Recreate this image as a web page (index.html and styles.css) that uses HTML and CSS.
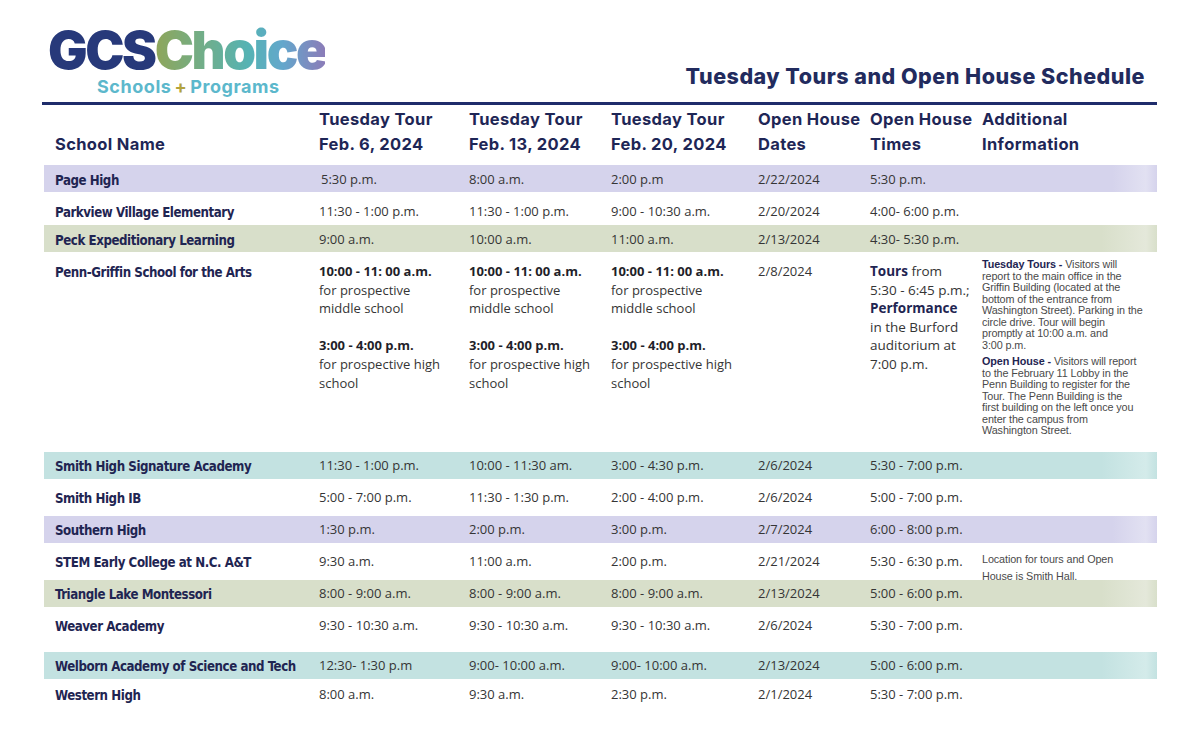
FILE: index.html
```html
<!DOCTYPE html>
<html lang="en">
<head>
<meta charset="utf-8">
<title>Tuesday Tours and Open House Schedule</title>
<link rel="stylesheet" href="styles.css">
</head>
<body>
<div class="page">
  <header class="top">
    <div class="logo">
      <div class="wordmark"><span class="gcs">GCS</span><span class="choice">Choice</span></div>
      <div class="tag">Schools<span class="plus">+</span>Programs</div>
    </div>
    <h1 class="title">Tuesday Tours and Open House Schedule</h1>
  </header>

  <div class="table">
    <div class="row head">
      <div class="th">School Name</div>
      <div class="th">Tuesday Tour<br>Feb. 6, 2024</div>
      <div class="th">Tuesday Tour<br>Feb. 13, 2024</div>
      <div class="th">Tuesday Tour<br>Feb. 20, 2024</div>
      <div class="th">Open House<br>Dates</div>
      <div class="th">Open House<br>Times</div>
      <div class="th">Additional<br>Information</div>
    </div>

    <div class="row band lav first">
      <div class="name">Page High</div>
      <div class="cell nudge">5:30 p.m.</div>
      <div class="cell">8:00 a.m.</div>
      <div class="cell">2:00 p.m</div>
      <div class="cell">2/22/2024</div>
      <div class="cell">5:30 p.m.</div>
      <div class="cell"></div>
    </div>

    <div class="row r33">
      <div class="name">Parkview Village Elementary</div>
      <div class="cell">11:30 - 1:00 p.m.</div>
      <div class="cell">11:30 - 1:00 p.m.</div>
      <div class="cell">9:00 - 10:30 a.m.</div>
      <div class="cell">2/20/2024</div>
      <div class="cell">4:00- 6:00 p.m.</div>
      <div class="cell"></div>
    </div>

    <div class="row band sage first">
      <div class="name">Peck Expeditionary Learning</div>
      <div class="cell">9:00 a.m.</div>
      <div class="cell">10:00 a.m.</div>
      <div class="cell">11:00 a.m.</div>
      <div class="cell">2/13/2024</div>
      <div class="cell">4:30- 5:30 p.m.</div>
      <div class="cell"></div>
    </div>

    <div class="row penn">
      <div class="name">Penn-Griffin School for the Arts</div>
      <div class="cell tall"><b>10:00 - 11: 00 a.m.</b><br>for prospective<br>middle school<br><br><b>3:00 - 4:00 p.m.</b><br>for prospective high<br>school</div>
      <div class="cell tall"><b>10:00 - 11: 00 a.m.</b><br>for prospective<br>middle school<br><br><b>3:00 - 4:00 p.m.</b><br>for prospective high<br>school</div>
      <div class="cell tall"><b>10:00 - 11: 00 a.m.</b><br>for prospective<br>middle school<br><br><b>3:00 - 4:00 p.m.</b><br>for prospective high<br>school</div>
      <div class="cell">2/8/2024</div>
      <div class="cell tall times"><b>Tours</b> from<br>5:30 - 6:45 p.m.;<br><b>Performance</b><br>in the Burford<br>auditorium at<br>7:00 p.m.</div>
      <div class="info">
        <p><b>Tuesday Tours -</b> Visitors will<br>report to the main office in the<br>Griffin Building (located at the<br>bottom of the entrance from<br>Washington Street). Parking in the<br>circle drive. Tour will begin<br>promptly at 10:00 a.m. and<br>3:00 p.m.</p>
        <p><b>Open House -</b> Visitors will report<br>to the February 11 Lobby in the<br>Penn Building to register for the<br>Tour. The Penn Building is the<br>first building on the left once you<br>enter the campus from<br>Washington Street.</p>
      </div>
    </div>

    <div class="row band teal">
      <div class="name">Smith High Signature Academy</div>
      <div class="cell">11:30 - 1:00 p.m.</div>
      <div class="cell">10:00 - 11:30 am.</div>
      <div class="cell">3:00 - 4:30 p.m.</div>
      <div class="cell">2/6/2024</div>
      <div class="cell">5:30 - 7:00 p.m.</div>
      <div class="cell"></div>
    </div>

    <div class="row r37">
      <div class="name">Smith High IB</div>
      <div class="cell">5:00 - 7:00 p.m.</div>
      <div class="cell">11:30 - 1:30 p.m.</div>
      <div class="cell">2:00 - 4:00 p.m.</div>
      <div class="cell">2/6/2024</div>
      <div class="cell">5:00 - 7:00 p.m.</div>
      <div class="cell"></div>
    </div>

    <div class="row band lav">
      <div class="name">Southern High</div>
      <div class="cell">1:30 p.m.</div>
      <div class="cell">2:00 p.m.</div>
      <div class="cell">3:00 p.m.</div>
      <div class="cell">2/7/2024</div>
      <div class="cell">6:00 - 8:00 p.m.</div>
      <div class="cell"></div>
    </div>

    <div class="row r37">
      <div class="name">STEM Early College at N.C. A&amp;T</div>
      <div class="cell">9:30 a.m.</div>
      <div class="cell">11:00 a.m.</div>
      <div class="cell">2:00 p.m.</div>
      <div class="cell">2/21/2024</div>
      <div class="cell">5:30 - 6:30 p.m.</div>
      <div class="note">Location for tours and Open<br>House is Smith Hall.</div>
    </div>

    <div class="row band sage">
      <div class="name">Triangle Lake Montessori</div>
      <div class="cell">8:00 - 9:00 a.m.</div>
      <div class="cell">8:00 - 9:00 a.m.</div>
      <div class="cell">8:00 - 9:00 a.m.</div>
      <div class="cell">2/13/2024</div>
      <div class="cell">5:00 - 6:00 p.m.</div>
      <div class="cell"></div>
    </div>

    <div class="row r45">
      <div class="name">Weaver Academy</div>
      <div class="cell">9:30 - 10:30 a.m.</div>
      <div class="cell">9:30 - 10:30 a.m.</div>
      <div class="cell">9:30 - 10:30 a.m.</div>
      <div class="cell">2/6/2024</div>
      <div class="cell">5:30 - 7:00 p.m.</div>
      <div class="cell"></div>
    </div>

    <div class="row band teal">
      <div class="name">Welborn Academy of Science and Tech</div>
      <div class="cell">12:30- 1:30 p.m</div>
      <div class="cell">9:00- 10:00 a.m.</div>
      <div class="cell">9:00- 10:00 a.m.</div>
      <div class="cell">2/13/2024</div>
      <div class="cell">5:00 - 6:00 p.m.</div>
      <div class="cell"></div>
    </div>

    <div class="row last">
      <div class="name">Western High</div>
      <div class="cell">8:00 a.m.</div>
      <div class="cell">9:30 a.m.</div>
      <div class="cell">2:30 p.m.</div>
      <div class="cell">2/1/2024</div>
      <div class="cell">5:30 - 7:00 p.m.</div>
      <div class="cell"></div>
    </div>
  </div>
</div>
</body>
</html>
```
FILE: styles.css
```css
* { box-sizing: border-box; }
html, body { margin: 0; padding: 0; background: #ffffff; }
body { font-family: "Open Sans", "Noto Sans", sans-serif; color: #333333; }

.page { width: 1200px; height: 729px; padding-left: 42px; overflow: hidden; }

.top {
  width: 1115px;
  height: 105px;
  display: flex;
  justify-content: space-between;
  align-items: flex-end;
  border-bottom: 3px solid #1f2c6b;
}

.logo { padding-left: 6px; padding-bottom: 4px; }
.wordmark {
  font-family: "Inter", "Lato", sans-serif;
  font-weight: 900;
  font-size: 52.5px;
  line-height: 52px;
  letter-spacing: -2.4px;
  white-space: nowrap;
  margin-top: -4px;
}
.gcs { color: #27397a; }
.choice {
  background: linear-gradient(90deg, #8fa65a 0%, #6fae8c 30%, #55b3b4 55%, #63a7cc 75%, #8b7cb8 100%);
  -webkit-background-clip: text;
  background-clip: text;
  color: transparent;
}
.tag {
  font-family: "Inter", "Lato", sans-serif;
  font-weight: 700;
  font-size: 18px;
  line-height: 22px;
  color: #5cb8cc;
  padding-left: 49px;
  letter-spacing: 0.55px;
  white-space: nowrap;
}
.plus { color: #b3a33c; padding: 0 3px; }

.title {
  margin: 0 12px 14px 0;
  font-family: "Inter", "Lato", sans-serif;
  font-weight: 800;
  font-size: 21.5px;
  line-height: 24px;
  color: #222b5e;
  letter-spacing: 0.5px;
  white-space: nowrap;
}

.table { width: 1113px; margin-left: 2px; }

.row {
  display: grid;
  grid-template-columns: 264px 150px 142px 147px 112px 112px 1fr;
  align-items: start;
  padding-left: 11px;
}

.head { height: 60px; padding-top: 2px; }
.th {
  font-family: "Inter", "Lato", sans-serif;
  font-weight: 700;
  font-size: 16.5px;
  line-height: 25px;
  color: #1e2656;
  letter-spacing: 0.35px;
  align-self: end;
  padding-bottom: 8px;
  white-space: nowrap;
}

.band { height: 27px; padding-top: 4px; }
.band.first { padding-top: 5px; }
.lav { background: linear-gradient(90deg, #d5d3ec 0%, #d5d3ec 96%, #e2e1f2 99%, #d5d3ec 100%); }
.sage { background: linear-gradient(90deg, #d8dfca 0%, #d8dfca 95%, #e4e8da 99%, #d8dfca 100%); }
.teal { background: linear-gradient(90deg, #c3e2e1 0%, #c3e2e1 95%, #d4ebea 99%, #c3e2e1 100%); }
.r33 { height: 33px; padding-top: 10px; }
.r37 { height: 37px; padding-top: 9px; }
.r45 { height: 45px; padding-top: 9px; }
.penn { height: 200px; padding-top: 10px; }
.last { height: 50px; padding-top: 6px; }

.name {
  padding-top: 1.5px;
  font-family: "DejaVu Sans Condensed", "Liberation Sans", sans-serif;
  font-stretch: condensed;
  font-weight: 700;
  font-size: 13.2px;
  line-height: 18px;
  color: #1f2552;
  white-space: nowrap;
  letter-spacing: -0.45px;
}

.cell {
  font-size: 13px;
  line-height: 18px;
  color: #353535;
  white-space: nowrap;
}
.cell.nudge { padding-left: 2px; }
.cell.tall { line-height: 18.6px; }
.cell b { font-weight: 700; color: #1f1f2a; }
.times { font-size: 13.5px; }
.times b { color: #1f2552; }

.info {
  margin-top: -3px;
  font-family: "Liberation Sans", sans-serif;
  font-size: 10.8px;
  line-height: 11.5px;
  color: #4a4a4a;
  white-space: nowrap;
  letter-spacing: -0.1px;
}
.info p { margin: 0 0 5px 0; }
.info b { color: #1f2552; }

.note {
  margin-top: -1px;
  font-family: "Liberation Sans", sans-serif;
  font-size: 10.8px;
  line-height: 16.5px;
  color: #4a4a4a;
  white-space: nowrap;
  letter-spacing: -0.1px;
}
```
